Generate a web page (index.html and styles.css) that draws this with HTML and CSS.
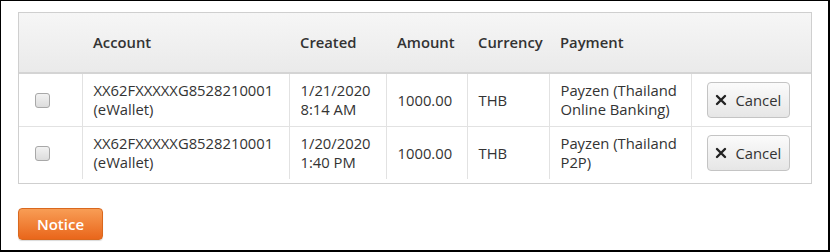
FILE: index.html
```html
<!DOCTYPE html>
<html>
<head>
<meta charset="utf-8">
<link rel="stylesheet" href="styles.css">
</head>
<body>
<div class="frame">
  <div class="grid-box">
    <table class="grid">
      <colgroup>
        <col class="c-check"><col class="c-account"><col class="c-created"><col class="c-amount"><col class="c-currency"><col class="c-payment"><col class="c-action">
      </colgroup>
      <thead>
        <tr>
          <th></th>
          <th>Account</th>
          <th>Created</th>
          <th>Amount</th>
          <th>Currency</th>
          <th>Payment</th>
          <th></th>
        </tr>
      </thead>
      <tbody>
        <tr>
          <td class="chk-cell"><span class="chk"></span></td>
          <td>XX62FXXXXXG8528210001<br>(eWallet)</td>
          <td>1/21/2020<br>8:14 AM</td>
          <td>1000.00</td>
          <td>THB</td>
          <td>Payzen (Thailand<br>Online Banking)</td>
          <td class="act"><button class="btn-cancel"><svg class="x" viewBox="0 0 12 12" width="12" height="12"><path d="M2 2 L10 10 M10 2 L2 10" stroke="#222" stroke-width="2.4" stroke-linecap="round"/></svg>Cancel</button></td>
        </tr>
        <tr>
          <td class="chk-cell"><span class="chk"></span></td>
          <td>XX62FXXXXXG8528210001<br>(eWallet)</td>
          <td>1/20/2020<br>1:40 PM</td>
          <td>1000.00</td>
          <td>THB</td>
          <td>Payzen (Thailand<br>P2P)</td>
          <td class="act"><button class="btn-cancel"><svg class="x" viewBox="0 0 12 12" width="12" height="12"><path d="M2 2 L10 10 M10 2 L2 10" stroke="#222" stroke-width="2.4" stroke-linecap="round"/></svg>Cancel</button></td>
        </tr>
      </tbody>
    </table>
  </div>
  <button class="btn-notice">Notice</button>
</div>
</body>
</html>
```
FILE: styles.css
```css
* { box-sizing: border-box; }
html, body { margin: 0; padding: 0; background: #fff; }
body {
  width: 830px;
  height: 252px;
  border-style: solid;
  border-color: #000;
  border-width: 1px 2px 2px 1px;
  font-family: "Open Sans", "DejaVu Sans", sans-serif;
  font-size: 14.8px;
  color: #333;
}
.frame {
  padding: 11px 0 0 17px;
  display: flex;
  flex-direction: column;
  align-items: flex-start;
  gap: 24px;
}
.grid-box {
  width: 794px;
  border: 1px solid #cfcfcf;
  padding-bottom: 4px;
}
.grid {
  width: 792px;
  border-collapse: collapse;
  table-layout: fixed;
}
.c-check { width: 63px; }
.c-account { width: 207px; }
.c-created { width: 97px; }
.c-amount { width: 81px; }
.c-currency { width: 82px; }
.c-payment { width: 142px; }
.c-action { width: 120px; }
.grid th {
  height: 60px;
  background: linear-gradient(#f6f6f6, #eaeaea);
  border-bottom: 2px solid #d4d4d4;
  text-align: left;
  font-weight: 600;
  padding: 0 11px 2px;
  color: #333;
}
.grid td {
  padding: 7px 11px;
  line-height: 19px;
  vertical-align: middle;
  border-left: 1px solid #e2e2e2;
  white-space: nowrap;
}
.grid td:first-child { border-left: none; }
.grid tbody tr:first-child td { border-bottom: 1px solid #e2e2e2; }
.grid td.chk-cell { padding-left: 16px; }
.chk {
  display: block;
  width: 15px;
  height: 15px;
  border: 1px solid #a8a8a8;
  border-radius: 3px;
  background: linear-gradient(#f2f2f2, #dcdcdc);
}
.grid td.act { padding-left: 15px; padding-right: 15px; }
.btn-cancel {
  display: flex;
  align-items: center;
  gap: 9px;
  width: 83px;
  height: 36px;
  padding: 0 0 0 7px;
  border: 1px solid #c4c4c4;
  border-radius: 4px;
  background: linear-gradient(#fbfbfb, #e6e6e6);
  font-family: inherit;
  font-size: 14.8px;
  color: #333;
}
.x { flex: none; }
.btn-notice {
  width: 85px;
  height: 32px;
  border: 1px solid #d9681e;
  border-radius: 4px;
  background: linear-gradient(#f89d55, #e9661b);
  color: #fff;
  font-family: inherit;
  font-size: 15px;
  font-weight: 600;
  padding: 0;
  box-shadow: 0 1px 1px rgba(0,0,0,0.15);
}
```
